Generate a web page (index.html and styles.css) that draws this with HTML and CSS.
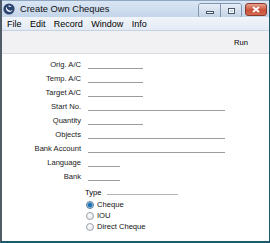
FILE: index.html
```html
<!DOCTYPE html>
<html lang="en">
<head>
  <meta charset="UTF-8">
  <title>Create Own Cheques</title>
  <link rel="stylesheet" href="styles.css">
</head>
<body>

  <div class="window">
    <div class="titlebar">
      <svg class="app-icon" width="12" height="12" viewBox="0 0 12 12">
        <circle cx="6" cy="6" r="5.6" fill="#2c4470"/>
        <path d="M3.2 3.4 C2.4 5.6 3.6 8.6 6.6 8.8 C8.2 8.9 9.2 8 9.6 7 C8.6 7.8 7 7.9 5.8 7.2 C4.4 6.4 3.6 5 3.2 3.4 Z" fill="#fff"/>
        <path d="M5.6 2.6 C6.8 2.4 8 3 8.6 4 C7.8 3.6 6.6 3.5 5.6 3.9 Z" fill="#fff"/>
      </svg>
      <span class="title">Create Own Cheques</span>
      <div class="controls">
        <div class="ctl-pair">
          <span class="ctl"><span class="glyph-min"></span></span>
          <span class="ctl"><span class="glyph-max"></span></span>
        </div>
        <span class="ctl close">
          <svg width="8" height="7" viewBox="0 0 8 7">
            <path d="M1 1 L7 6 M7 1 L1 6" stroke="#fff" stroke-width="1.8"/>
          </svg>
        </span>
      </div>
    </div>

    <div class="menubar">
      <span>File</span>
      <span>Edit</span>
      <span>Record</span>
      <span>Window</span>
      <span>Info</span>
    </div>

    <div class="toolbar">
      <span class="run">Run</span>
    </div>

    <div class="content">
      <div class="form">
        <label>Orig. A/C</label><span class="field short"></span>
        <label>Temp. A/C</label><span class="field short"></span>
        <label>Target A/C</label><span class="field short"></span>
        <label>Start No.</label><span class="field long"></span>
        <label>Quantity</label><span class="field short"></span>
        <label>Objects</label><span class="field long"></span>
        <label>Bank Account</label><span class="field long"></span>
        <label>Language</label><span class="field tiny"></span>
        <label>Bank</label><span class="field tiny"></span>
      </div>

      <div class="group">
        <div class="group-head">
          <span>Type</span>
          <span class="group-line"></span>
        </div>
        <div class="radio"><span class="dot checked"></span>Cheque</div>
        <div class="radio"><span class="dot"></span>IOU</div>
        <div class="radio"><span class="dot"></span>Direct Cheque</div>
      </div>
    </div>
  </div>

</body>
</html>
```

FILE: styles.css
```css
* {
  margin: 0;
  padding: 0;
  box-sizing: border-box;
}

body {
  background: #fff;
  font-family: 'Liberation Sans', Arial, sans-serif;
  color: #000;
}

.window {
  width: 270px;
  height: 243px;
  display: flex;
  flex-direction: column;
  border-left: 2px solid #4f5b66;
  border-right: 1px solid #1d5a70;
  border-bottom: 2px solid #1d5a70;
  box-shadow: inset -1px -1px 0 #58a8dc;
  overflow: hidden;
}

.titlebar {
  height: 17px;
  display: flex;
  align-items: center;
  padding-left: 1px;
  background: linear-gradient(#dae6f4, #c4d5ea);
  border-top: 1px solid #8fa6c0;
}

.app-icon {
  margin-right: 5px;
}

.title {
  font-size: 9.3px;
  color: #111;
  flex: 1;
}

.controls {
  display: flex;
  align-items: flex-start;
  gap: 3px;
  padding-right: 2px;
  align-self: flex-start;
  margin-top: 2px;
}

.ctl-pair {
  display: flex;
  border: 1px solid #8096b0;
  border-radius: 3px;
  overflow: hidden;
}

.ctl {
  width: 21px;
  height: 13px;
  display: flex;
  align-items: center;
  justify-content: center;
  background: linear-gradient(#e7eef7, #c3d2e4);
}

.ctl-pair .ctl + .ctl {
  border-left: 1px solid #8096b0;
}

.glyph-min {
  width: 8px;
  height: 3px;
  background: #fff;
  border: 1px solid #44566c;
  margin-top: 3px;
}

.glyph-max {
  width: 7px;
  height: 6px;
  border: 1px solid #44566c;
  background: #c8d5e4;
  box-shadow: inset 0 0 0 1px #fff;
}

.ctl.close {
  width: 22px;
  border: 1px solid #8a3a2c;
  border-radius: 3px;
  background: linear-gradient(#e9a28e, #c9503a 55%, #d46a50);
}

.menubar {
  height: 14px;
  display: flex;
  align-items: center;
  padding-left: 5px;
  font-size: 9px;
  background: linear-gradient(#f1f5fa, #e4ebf5);
  border-bottom: 1px solid #c5d2e2;
}

.menubar span {
  margin-right: 8.4px;
}

.toolbar {
  height: 23px;
  display: flex;
  align-items: center;
  justify-content: flex-end;
  padding-right: 21px;
  background: #f1f1f3;
  border-bottom: 1px solid #d9dde3;
}

.run {
  font-size: 7.6px;
  padding-top: 1px;
}

.content {
  flex: 1;
  background: #fff;
  padding-top: 1px;
  font-size: 7.6px;
}

.form {
  display: grid;
  grid-template-columns: 79px auto;
  grid-auto-rows: 14px;
  column-gap: 7px;
  justify-content: start;
}

.form label {
  text-align: right;
  align-self: end;
  line-height: 9px;
  color: #1a1a1a;
}

.field {
  align-self: end;
  height: 1px;
  border-bottom: 1px solid #9c9c9c;
}

.field.short { width: 55px; }
.field.long { width: 137px; }
.field.tiny { width: 32px; }

.group {
  margin-left: 83px;
  margin-top: 7px;
}

.group-head {
  display: flex;
  align-items: center;
  line-height: 10px;
  height: 10px;
  margin-bottom: 1px;
}

.group-line {
  width: 71px;
  height: 1px;
  background: #b4b4b4;
  margin-left: 6px;
  margin-top: 2px;
}

.radio {
  display: flex;
  align-items: center;
  height: 11px;
  line-height: 11px;
  color: #111;
}

.dot {
  width: 8px;
  height: 8px;
  border-radius: 50%;
  border: 1px solid #9aa3ad;
  background: radial-gradient(circle at 40% 35%, #fff, #dde1e6);
  margin-left: 1px;
  margin-right: 3px;
}

.dot.checked {
  border-color: #5b7a96;
  background: radial-gradient(circle, #1d73b8 0 1.8px, #6aa9dc 2.4px, #e2ebf4 3.2px);
}
```
